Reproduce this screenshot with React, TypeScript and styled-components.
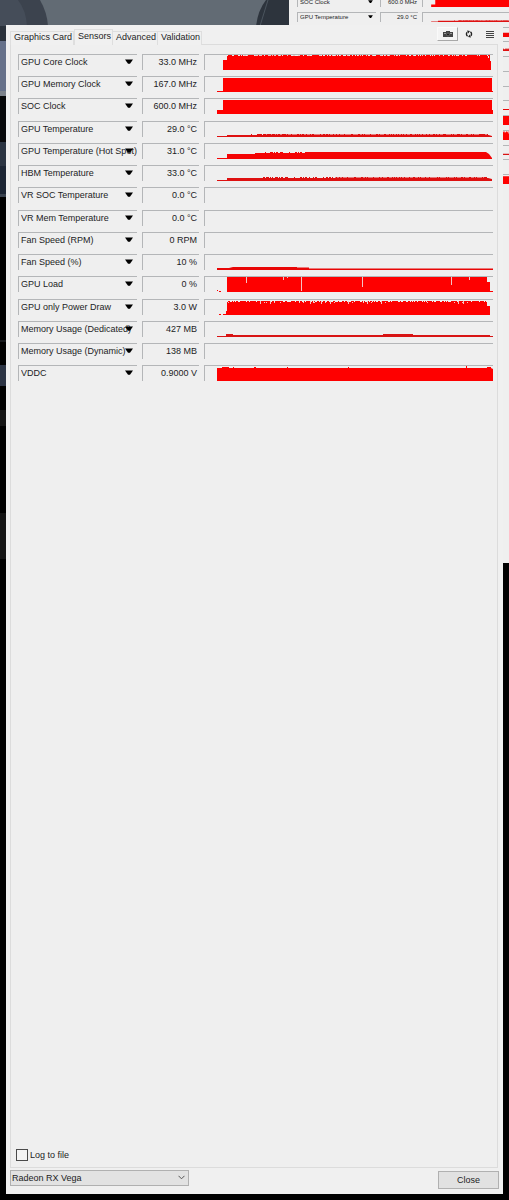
import React from "react";
import styled, { createGlobalStyle, css } from "styled-components";

const GlobalStyle = createGlobalStyle`
  * { box-sizing: border-box; }
  body {
    margin: 0;
    background: #000;
    color: #1c1c24;
    font-family: "Liberation Sans", Arial, sans-serif;
    font-size: 9px;
    line-height: 12px;
  }
`;

const RED = "#fe0000";
const DARK_RED = "#de1010";

/* ---------- history shapes, drawn in a 288 x 15 box ---------- */

const noise = (i: number) => {
  const v = Math.sin(i * 12.9898) * 43758.5453;
  return v - Math.floor(v);
};

/* A row of single-sample dips or peaks between two x positions. */
const specks = (from: number, to: number, top: number, height: number, density: number, seed: number) => {
  let d = "";
  for (let x = from; x < to; x += 1) {
    if (noise(x + seed) < density) d += `M${x} ${top}h1v${height}h-1z`;
  }
  return d;
};

interface Trace {
  fill: string;
  area: string;
  gaps?: string;
}

const traces: Record<string, Trace> = {
  core: {
    fill: RED,
    area:
      "M18 15V5H22V1H283V3H285V6H286V15z" + specks(23, 284, 0, 1, 0.68, 3) + "M284 0h1v6h-1z",
    gaps: specks(24, 282, 0, 1, 0.2, 9),
  },
  memory: { fill: RED, area: "M12 14H18V1H287V14H288V15H12z" },
  soc: { fill: RED, area: "M12 15V11H18V1H287V11H288V15z" },
  gpuTemp: {
    fill: DARK_RED,
    area: "M12 14H22V13H60V12.5H282L287 14V15H12z" + specks(46, 283, 12, 1, 0.4, 5),
  },
  hotSpot: {
    fill: "#f40404",
    area: "M12 14H22V10H50V9H100V8H281L284 10L287 14V15H12z" + specks(60, 100, 8, 1, 0.3, 7),
  },
  hbm: {
    fill: DARK_RED,
    area: "M12 14H22V12H130V11.5H281L287 13V15H12z" + specks(58, 282, 11, 1, 0.35, 2),
  },
  fan: { fill: "#e80606", area: "M12 13H24L28 12H66V12H92V12.5H104V13.5H288V15H12z" },
  load: {
    fill: RED,
    area: "M12 13h1v1h-1zM14 14h2v1h-2zM22 15V0H282V5H285V14H288V15z",
    gaps: "M41 0h1v6h-1zM78 0h1v3h-1zM82 0h1v1h-1zM96 0h1v14h-1zM157 0h1v10h-1zM246 0h1v8h-1zM264 0h1v3h-1z",
  },
  power: {
    fill: RED,
    area:
      "M14 14h2v1h-2zM18 14H21V11H22V2H282V6H285V15H18z" + specks(23, 281, 1, 1, 0.62, 11),
    gaps: specks(23, 281, 2, 1, 0.08, 4) + specks(23, 281, 1, 3, 0.04, 8),
  },
  dedicated: {
    fill: "#d81414",
    area: "M12 14H21V12H28V13H178V12H208V13H285V14H288V15H12z",
  },
  vddc: {
    fill: RED,
    area: "M12 15V2H17V1H24V2H286L288 3V15zM28 1h1v1h-1zM49 1h2v1h-2zM82 1h1v1h-1zM143 1h1v1h-1zM261 0h1v2h-1zM282 1h4v1h-4z",
  },
};

interface Sensor {
  name: string;
  value: string;
  trace?: string;
}

const sensors: Sensor[] = [
  { name: "GPU Core Clock", value: "33.0 MHz", trace: "core" },
  { name: "GPU Memory Clock", value: "167.0 MHz", trace: "memory" },
  { name: "SOC Clock", value: "600.0 MHz", trace: "soc" },
  { name: "GPU Temperature", value: "29.0 °C", trace: "gpuTemp" },
  { name: "GPU Temperature (Hot Spot)", value: "31.0 °C", trace: "hotSpot" },
  { name: "HBM Temperature", value: "33.0 °C", trace: "hbm" },
  { name: "VR SOC Temperature", value: "0.0 °C" },
  { name: "VR Mem Temperature", value: "0.0 °C" },
  { name: "Fan Speed (RPM)", value: "0 RPM" },
  { name: "Fan Speed (%)", value: "10 %", trace: "fan" },
  { name: "GPU Load", value: "0 %", trace: "load" },
  { name: "GPU only Power Draw", value: "3.0 W", trace: "power" },
  { name: "Memory Usage (Dedicated)", value: "427 MB", trace: "dedicated" },
  { name: "Memory Usage (Dynamic)", value: "138 MB" },
  { name: "VDDC", value: "0.9000 V", trace: "vddc" },
];

/* ---------- desktop and windows ---------- */

const Desktop = styled.div`
  position: relative;
  min-height: 100vh;
  padding: 25px 6px 6px;
  overflow: hidden;
  display: flex;
  flex-direction: column;
`;

const Wallpaper = styled.svg`
  position: absolute;
  left: 0;
  top: 0;
`;

const BackWindow = styled.div`
  position: absolute;
  left: 289px;
  top: 0;
  width: 330px;
  height: 563px;
  padding-left: 8px;
  background: #efefef;
  overflow: hidden;
`;

const Window = styled.main`
  position: relative;
  flex: 1;
  display: flex;
  flex-direction: column;
  background: #f0f0f0;
`;

const Header = styled.header`
  display: flex;
  justify-content: space-between;
  align-items: flex-end;
  height: 20px;
  padding: 0 3px 0 4px;
`;

const Tabs = styled.div`
  display: flex;
  align-items: flex-end;
`;

const Tab = styled.button<{ $active?: boolean }>`
  position: relative;
  height: ${(p) => (p.$active ? 16 : 14)}px;
  padding: 0 1px 2px 3px;
  border: 1px solid #dedede;
  border-bottom: 0;
  border-left-width: ${(p) => (p.$active ? 1 : 0)}px;
  background: #f0f0f0;
  color: inherit;
  font: inherit;
  line-height: 11px;
  white-space: nowrap;
  &:first-child { border-left-width: 1px; }
`;

const Tools = styled.div`
  display: flex;
  height: 18px;
`;

const Tool = styled.button<{ $raised?: boolean }>`
  display: flex;
  align-items: center;
  justify-content: center;
  width: 21px;
  height: 14px;
  padding: 0;
  border: 1px solid transparent;
  background: none;
  ${(p) =>
    p.$raised &&
    css`
      background: #f4f4f4;
      border-color: #fafafa #a8a8a8 #a8a8a8 #fafafa;
    `}
`;

const Panel = styled.section`
  flex: 1;
  display: flex;
  flex-direction: column;
  justify-content: space-between;
  margin: -1px 5px 0 4px;
  padding: 9px 4px 6px 5px;
  border: 1px solid #dcdcdc;
  background: #efefef;
`;

const Footer = styled.footer`
  display: flex;
  justify-content: space-between;
  height: 26px;
  padding: 2px 4px 0;
`;

/* ---------- sensor list ---------- */

const SensorList = styled.div<{ $small?: boolean }>`
  display: flex;
  flex-direction: column;
  ${(p) =>
    p.$small
      ? css`
          margin-top: -3px;
          font-size: 6px;
          line-height: 8px;
        `
      : css`
          margin-left: 2px;
        `}
`;

const Row = styled.div<{ $small?: boolean }>`
  display: flex;
  gap: ${(p) => (p.$small ? 4 : 5)}px;
  height: ${(p) => (p.$small ? 10 : 16)}px;
  margin-bottom: ${(p) => (p.$small ? 5 : 6)}px;
  &:nth-child(4n + 3) {
    margin-bottom: ${(p) => (p.$small ? 4 : 7)}px;
  }
`;

const sunken = css`
  border-top: 1px solid #b4b6b8;
  border-left: 1px solid #b4b6b8;
`;

const NameBox = styled.div<{ $small?: boolean }>`
  position: relative;
  flex: 0 0 ${(p) => (p.$small ? 79 : 119)}px;
  ${sunken}
`;

const NameSelect = styled.select`
  display: block;
  width: 100%;
  height: 100%;
  margin: 0;
  padding: 0 0 2px 2px;
  border: 0;
  border-radius: 0;
  appearance: none;
  background: none;
  color: inherit;
  font: inherit;
`;

const Arrow = styled.svg<{ $small?: boolean }>`
  position: absolute;
  right: ${(p) => (p.$small ? 3 : 4)}px;
  top: ${(p) => (p.$small ? 2 : 4)}px;
  width: ${(p) => (p.$small ? 5 : 8)}px;
  height: ${(p) => (p.$small ? 3 : 5)}px;
  pointer-events: none;
`;

const ValueBox = styled.div<{ $small?: boolean }>`
  flex: 0 0 ${(p) => (p.$small ? 38 : 57)}px;
  padding: ${(p) => (p.$small ? "0 1px" : "1px 2px 0")};
  text-align: right;
  white-space: nowrap;
  ${sunken}
`;

const ChartBox = styled.div`
  flex: 1;
  min-width: 0;
  ${sunken}
  svg {
    display: block;
    width: 100%;
    height: 100%;
  }
`;

const Chart = ({ trace }: { trace?: string }) => {
  const t = trace ? traces[trace] : undefined;
  return (
    <ChartBox>
      {t && (
        <svg viewBox="0 0 288 15" preserveAspectRatio="none" aria-hidden="true">
          <path d={t.area} fill={t.fill} />
          {t.gaps && <path d={t.gaps} fill="#f3c4c4" />}
        </svg>
      )}
    </ChartBox>
  );
};

const SensorRow = ({ sensor, small, bare }: { sensor: Sensor; small?: boolean; bare?: boolean }) => (
  <Row $small={small}>
    <NameBox $small={small}>
      {!bare && (
        <>
          <NameSelect aria-label={`${sensor.name} sensor`}>
            <option>{sensor.name}</option>
          </NameSelect>
          <Arrow $small={small} viewBox="0 0 8 5" aria-hidden="true">
            <path d="M0 0.5H8L5 4.8H3z" fill="#000" />
          </Arrow>
        </>
      )}
    </NameBox>
    <ValueBox $small={small}>{bare ? null : sensor.value}</ValueBox>
    <Chart trace={sensor.trace} />
  </Row>
);

/* ---------- form controls ---------- */

const LogLabel = styled.label`
  display: flex;
  align-items: center;
  gap: 2px;
  align-self: flex-start;
`;

const LogCheck = styled.input`
  width: 12px;
  height: 12px;
  margin: 0;
  appearance: none;
  border: 1px solid #4a4a4a;
  background: #f4f4f4;
`;

const CardPicker = styled.div`
  position: relative;
  width: 179px;
  height: 16px;
  svg {
    position: absolute;
    right: 4px;
    top: 5px;
    pointer-events: none;
  }
`;

const CardSelect = styled.select`
  display: block;
  width: 100%;
  height: 100%;
  margin: 0;
  padding: 0 0 0 1px;
  appearance: none;
  border: 1px solid #b0b0b0;
  border-radius: 0;
  background: #e2e2e2;
  color: inherit;
  font: inherit;
`;

const CloseButton = styled.button`
  width: 61px;
  height: 18px;
  margin-top: 1px;
  padding: 0;
  border: 1px solid #b0b0b0;
  background: #e1e1e1;
  color: inherit;
  font: inherit;
`;

export default function App() {
  return (
    <Desktop>
      <GlobalStyle />
      <Wallpaper width="289" height="563" viewBox="0 0 289 563" aria-hidden="true">
        <rect width="289" height="26" fill="#626b74" />
        <path d="M0 0H40Q47 12 48 26H0z" fill="#3c434e" />
        <path d="M0 0H18Q26 10 27 26H0z" fill="#454d59" />
        <path d="M266 0H289V26H256Q258 10 266 0z" fill="#2d343d" />
        <path d="M268 0L260 26" stroke="#4b545e" fill="none" />
        <rect y="26" width="6" height="15" fill="#2a313b" />
        <rect y="41" width="6" height="50" fill="#66718a" />
        <rect y="91" width="6" height="5" fill="#7d838c" />
        <rect y="96" width="6" height="46" fill="#07080a" />
        <rect y="142" width="6" height="24" fill="#2b3442" />
        <rect y="166" width="6" height="28" fill="#1c2534" />
        <rect y="194" width="6" height="3" fill="#39424f" />
        <rect y="340" width="6" height="2" fill="#17191c" />
        <rect y="365" width="6" height="21" fill="#2c3444" />
        <rect y="410" width="6" height="16" fill="#151515" />
        <rect y="513" width="6" height="46" fill="#141414" />
      </Wallpaper>

      <BackWindow>
        <SensorList $small>
          {sensors.slice(2).map((s, i) => (
            <SensorRow key={s.name} sensor={s} small bare={i > 1} />
          ))}
        </SensorList>
      </BackWindow>

      <Window>
        <Header>
          <Tabs role="tablist">
            <Tab role="tab">Graphics Card</Tab>
            <Tab role="tab" aria-selected="true" $active>
              Sensors
            </Tab>
            <Tab role="tab">Advanced</Tab>
            <Tab role="tab">Validation</Tab>
          </Tabs>
          <Tools>
            <Tool $raised aria-label="Take screenshot">
              <svg width="10" height="7" viewBox="0 0 10 7">
                <path d="M0 1H3V0H7V1H10V6H0z" fill="#444" />
                <path d="M1 2H3V3H1zM7 2H9V3H7z" fill="#999" />
                <circle cx="5" cy="3.5" r="1.5" fill="#222" stroke="#888" strokeWidth="0.6" />
              </svg>
            </Tool>
            <Tool aria-label="Refresh">
              <svg width="8" height="8" viewBox="0 0 8 8">
                <path d="M2.6 6.2A2.6 2.6 0 0 1 2.2 2.2M5.4 1.8A2.6 2.6 0 0 1 5.8 5.8" fill="none" stroke="#222" strokeWidth="1.4" />
                <path d="M2 0.6L5 1L3.2 3.4zM6 7.4L3 7L4.8 4.6z" fill="#222" />
              </svg>
            </Tool>
            <Tool aria-label="Menu">
              <svg width="8" height="7" viewBox="0 0 8 7">
                <path d="M0 0H8V1H0zM0 2H8V3H0zM0 4H8V5H0zM0 6H8V7H0z" fill="#444" />
              </svg>
            </Tool>
          </Tools>
        </Header>

        <Panel>
          <SensorList>
            {sensors.map((s) => (
              <SensorRow key={s.name} sensor={s} />
            ))}
          </SensorList>
          <LogLabel>
            <LogCheck type="checkbox" />
            Log to file
          </LogLabel>
        </Panel>

        <Footer>
          <CardPicker>
            <CardSelect aria-label="Graphics card">
              <option>Radeon RX Vega</option>
            </CardSelect>
            <svg width="7" height="5" viewBox="0 0 7 5" aria-hidden="true">
              <path d="M0.5 0.8L3.5 3.8L6.5 0.8" fill="none" stroke="#555" />
            </svg>
          </CardPicker>
          <CloseButton>Close</CloseButton>
        </Footer>
      </Window>
    </Desktop>
  );
}
